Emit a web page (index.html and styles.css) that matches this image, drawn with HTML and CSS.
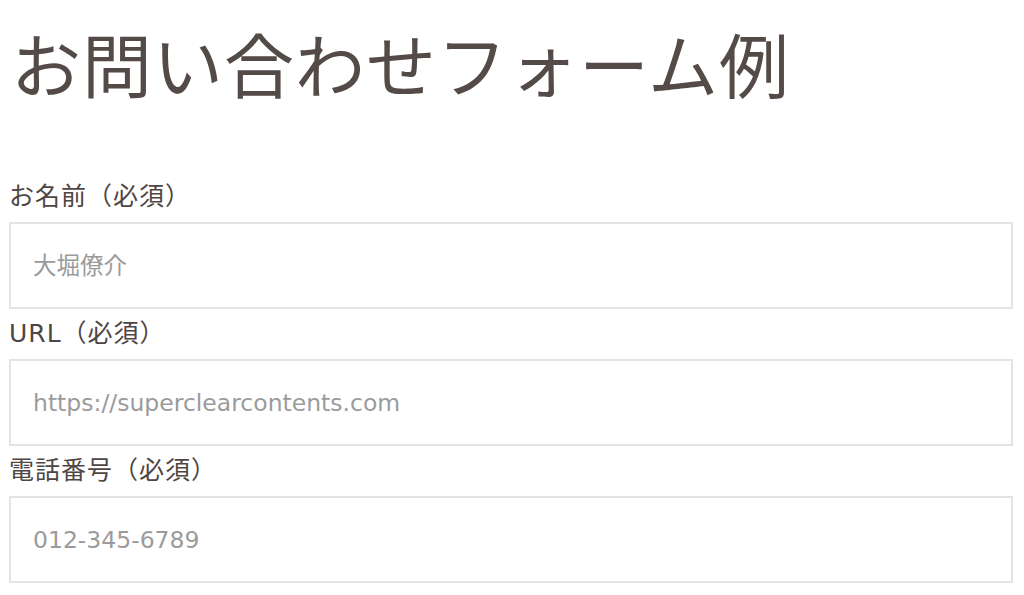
FILE: index.html
```html
<!DOCTYPE html>
<html lang="ja">
<head>
<meta charset="utf-8">
<link rel="stylesheet" href="styles.css">
</head>
<body>
<main class="page">
  <h1 class="title">お問い合わせフォーム例</h1>
  <form class="form">
    <div class="field">
      <label class="label">お名前（必須）</label>
      <input class="input" type="text" placeholder="大堀僚介">
    </div>
    <div class="field">
      <label class="label">URL（必須）</label>
      <input class="input" type="text" placeholder="https://superclearcontents.com">
    </div>
    <div class="field">
      <label class="label">電話番号（必須）</label>
      <input class="input" type="text" placeholder="012-345-6789">
    </div>
  </form>
</main>
</body>
</html>
```
FILE: styles.css
```css
html, body {
  margin: 0;
  padding: 0;
  background: #ffffff;
}
body {
  font-family: "DejaVu Sans", "Noto Sans CJK JP", sans-serif;
  color: #4f4644;
}
.page {
  padding: 0 11px 0 9px;
}
.title {
  margin: 10px 0 0 2px;
  font-family: "Noto Sans CJK JP", sans-serif;
  font-size: 70px;
  font-weight: 400;
  line-height: 105px;
  color: #544a47;
  letter-spacing: 1px;
}
.form {
  margin-top: 57px;
  display: flex;
  flex-direction: column;
}
.field {
  display: flex;
  flex-direction: column;
  padding-top: 7px;
}
.label {
  display: block;
  font-size: 25px;
  line-height: 36px;
  letter-spacing: 1px;
  margin: 0 0 7px 0;
  color: #4f4644;
}
.input {
  box-sizing: border-box;
  width: 100%;
  height: 87px;
  margin: 0;
  border: 2px solid #e4e4e4;
  border-radius: 0;
  background: #fff;
  padding: 0 22px;
  font-family: "DejaVu Sans", "Noto Sans CJK JP", sans-serif;
  font-size: 23.5px;
  color: #333;
  outline: none;
}
.input::placeholder {
  color: #9b9b9b;
  opacity: 1;
}
```
